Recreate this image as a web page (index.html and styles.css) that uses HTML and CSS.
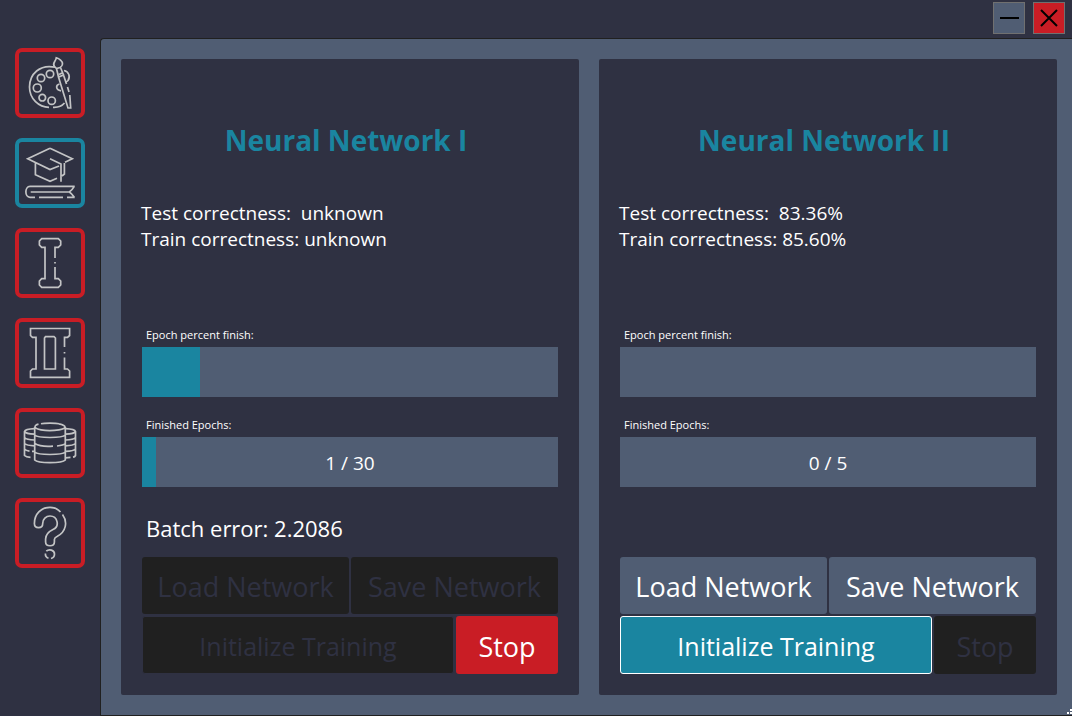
FILE: index.html
```html
<!DOCTYPE html>
<html lang="en">
<head>
<meta charset="utf-8">
<title>Neural Network Trainer</title>
<link rel="stylesheet" href="styles.css">
</head>
<body>
<div class="window">
  <header class="titlebar">
    <button class="win-btn" type="button" aria-label="Minimize">
      <svg viewBox="0 0 30 30"><path d="M6 15H25" stroke-width="2"/></svg>
    </button>
    <button class="win-btn win-close" type="button" aria-label="Close">
      <svg viewBox="0 0 30 30"><path d="M7 7L23 23M23 7L7 23" stroke-width="2"/></svg>
    </button>
  </header>
  <div class="body">
    <nav class="sidebar" aria-label="Sections">
      <button class="nav-btn" type="button" aria-label="Draw">
        <svg viewBox="4 4 62 62">
          <path d="M40 19.2C25 16 14.5 26 14.5 39C14.5 51 24 59.3 34 59.3M38 59.3C43 59.6 47 58 49.5 55M49 22.5C54 23.5 55.5 29 53 32.5C52 33.7 51 34 50.3 34"/>
          <circle cx="35" cy="26" r="3.7"/><circle cx="26" cy="30" r="3.7"/><circle cx="22.3" cy="40" r="4"/><circle cx="27.3" cy="49.7" r="3.3"/><circle cx="36.7" cy="52.7" r="3.7"/>
          <path d="M44.5 36C40.5 37 40.5 42 46 42.8"/>
          <path d="M39.5 18.5C36.5 15.5 41 13.5 41.3 9.8C44 10.5 47.8 13 47.5 16C47.3 18 46 19 45 19.5L41.5 20.5ZM41.5 20.5L43.5 29L48.5 27L45.5 19.5M43.5 29L53 60H55.7L54.8 47M48.5 27L51.5 36M52.5 39L54 44M44 26.5L48 24.5"/>
        </svg>
      </button>
      <button class="nav-btn nav-current" type="button" aria-label="Training" aria-current="page">
        <svg viewBox="4 4 62 62">
          <path d="M35 10.3L57.3 20.7L50 24.3M44 28L35 31.6L12.7 20.7L35 10.3M35 20.7L46 26V43.7M20.4 25V36.7L35 43.3L42 40.3M49.4 25V36L47 38"/>
          <path d="M59.7 48.4H15C9.5 48.4 9.5 59.3 15 59.3H20M24 59.3H48M52 59.3H59.7M59.3 48.4C57.5 51.5 56 53 54.3 54C56 55 57.5 56.5 59.3 59.3M15.7 54H54.3"/>
        </svg>
      </button>
      <button class="nav-btn" type="button" aria-label="Network I">
        <svg viewBox="4 4 62 62">
          <path d="M40 30V19.4H43.3L45.7 17V13L43.3 10.7H26.7L24.4 13V17L26.7 19.4H30V50.7H26.7L24.4 53V57L26.7 59.3H43.3L45.7 57V53L43.3 50.7H40V39M40 34V35.5"/>
        </svg>
      </button>
      <button class="nav-btn" type="button" aria-label="Network II">
        <svg viewBox="4 4 62 62">
          <path d="M49.5 29V19.4H52.5L54.6 17.5V10.5H15.5V17.5L17.5 19.4H21V51H17.5L15.5 53V59.4H54.6V53L52.5 51H49.5V39.5M49.5 34V35.5"/>
          <path d="M30.5 18.7H39L40.4 20V51H29.5V20Z"/>
        </svg>
      </button>
      <button class="nav-btn" type="button" aria-label="Datasets">
        <svg viewBox="4 4 62 62">
          <path d="M26 15.8C29 15 41 15 44 15.8C52 17.5 52 20.5 44 21.8C38 22.8 31 22.8 26 21.8C18.5 20.5 18.5 17.2 23.5 16.2M19.7 19V52C23 55.5 47 55.5 50.3 52V19M19.7 27C23 30.3 47 30.3 50.3 27M19.7 35.5C24 38 32 38.6 38 38.1M42 38C46 37.5 49 36.8 50.3 35.5M19.7 44C23 47.3 47 47.3 50.3 44"/>
          <path d="M19.5 20.7C14 21 10 22 9.5 23.5V47.5C11 49 13 49.2 15.5 49.4M9.5 23.5C10.5 25.3 15 26 19.5 26.2M9.5 29.5C11 31.3 15 31.9 19.5 32M9.5 35.5C11 37 15 37.7 19.5 37.8M9.5 41C11 42.8 13 43 14.5 43.2M17 43.4H19.5"/>
          <path d="M50.5 20.7C56 21 60 22 60.5 23.5V47.5C60 48.5 59 49 58 49.2M50.5 49.8L55.5 49.4M60.5 23.5C59.5 25.3 55 26 50.5 26.2M60.5 29.5C59 31.3 55 31.9 50.5 32M60.5 35.5C59 37 55 37.7 50.5 37.8M60.5 41C59 42.8 55 43.2 50.5 43.4"/>
        </svg>
      </button>
      <button class="nav-btn" type="button" aria-label="Help">
        <svg viewBox="4 4 62 62">
          <path d="M45.5 14C42.8 11 39 9.4 35 9.4C26 9.4 19.4 16 19.4 25.5C19.4 31 27.7 31 27.7 25.5C27.7 21 31 18 35 18C42.7 18 45 28.5 38 31.5C33 34 30.6 37 30.6 41V44C30.6 49 39.4 49 39.4 44V41.5C39.4 40 40.5 39.2 42 38.5C51 34 53 24 47.5 16.5"/>
          <path d="M31.3 53.2C34 50.5 39.5 52 39.5 56C39.5 58.5 38 60 36 60.5M33.5 60.3C31 59.5 30.3 58 30.4 55.5"/>
        </svg>
      </button>
    </nav>
    <main class="content">
      <section class="card">
        <h1 class="title">Neural Network I</h1>
        <p class="stats">Test correctness:&nbsp; unknown<br>Train correctness: unknown</p>
        <div class="controls">
          <div class="label" id="epoch-1">Epoch percent finish:</div>
          <div class="bar" role="progressbar" aria-labelledby="epoch-1" aria-valuenow="14"><div class="fill" style="width:14%"></div></div>
          <div class="label" id="done-1">Finished Epochs:</div>
          <div class="bar" role="progressbar" aria-labelledby="done-1" aria-valuenow="1" aria-valuemax="30"><div class="fill" style="width:3.33%"></div><span class="bar-text">1 / 30</span></div>
          <p class="batch">Batch error: 2.2086</p>
          <div class="row">
            <button class="btn" type="button" disabled>Load Network</button>
            <button class="btn" type="button" disabled>Save Network</button>
          </div>
          <div class="row">
            <button class="btn btn-init" type="button" disabled>Initialize Training</button>
            <button class="btn btn-stop" type="button">Stop</button>
          </div>
        </div>
      </section>
      <section class="card">
        <h1 class="title">Neural Network II</h1>
        <p class="stats">Test correctness:&nbsp; 83.36%<br>Train correctness: 85.60%</p>
        <div class="controls">
          <div class="label" id="epoch-2">Epoch percent finish:</div>
          <div class="bar" role="progressbar" aria-labelledby="epoch-2" aria-valuenow="0"></div>
          <div class="label" id="done-2">Finished Epochs:</div>
          <div class="bar" role="progressbar" aria-labelledby="done-2" aria-valuenow="0" aria-valuemax="5"><span class="bar-text">0 / 5</span></div>
          <p class="batch"></p>
          <div class="row">
            <button class="btn" type="button">Load Network</button>
            <button class="btn" type="button">Save Network</button>
          </div>
          <div class="row">
            <button class="btn btn-init" type="button">Initialize Training</button>
            <button class="btn btn-stop" type="button" disabled>Stop</button>
          </div>
        </div>
      </section>
      <svg class="grip" viewBox="0 0 6 6"><path d="M4 0h2v2h-2zM4 3h2v2h-2zM1 3h2v2h-2z"/></svg>
    </main>
  </div>
</div>
</body>
</html>
```
FILE: styles.css
```css
* { box-sizing: border-box; }

body {
  margin: 0;
  background: #2f3142;
  color: #fff;
  font-family: "Open Sans", "Noto Sans", sans-serif;
}

button { font: inherit; padding: 0; margin: 0; }

.window {
  display: flex;
  flex-direction: column;
  min-height: 100vh;
}

.titlebar {
  display: flex;
  justify-content: flex-end;
  gap: 8px;
  height: 38px;
  padding: 2px 7px 0 0;
}

.win-btn {
  width: 32px;
  height: 32px;
  background: #505d73;
  border: 1px solid #707070;
}
.win-close { background: #c91d25; }
.win-btn svg { display: block; width: 30px; height: 30px; stroke: #000; fill: none; }

.body { display: flex; flex: 1; }

.sidebar {
  display: flex;
  flex-direction: column;
  gap: 20px;
  flex: 0 0 100px;
  padding: 10px 15px;
}

.nav-btn {
  width: 70px;
  height: 70px;
  background: transparent;
  border: 4px solid #c91d25;
  border-radius: 7px;
}
.nav-current { border-color: #1a85a0; }
.nav-btn svg {
  display: block;
  width: 62px;
  height: 62px;
  fill: none;
  stroke: #c3c4c5;
  stroke-width: 1.7;
}

.content {
  position: relative;
  display: flex;
  flex: 1;
  gap: 20px;
  padding: 20px 15px 20px 20px;
  background: #505d73;
  border: 1px solid #202020;
  border-right: 0;
  border-top-left-radius: 4px;
}

.card {
  display: flex;
  flex-direction: column;
  flex: 1;
  padding: 61px 20px 21px;
  background: #2f3142;
  border-radius: 2px;
}

.title {
  margin: 0 8px 40px 0;
  color: #1a85a0;
  font-size: 28px;
  line-height: 40px;
  font-weight: 700;
  text-align: center;
}

.stats { margin: 0; font-size: 19px; line-height: 26px; }

.controls { margin-top: auto; padding: 0 1px; }

.label { padding-left: 4px; font-size: 11px; line-height: 16px; margin-bottom: 4px; }

.bar {
  position: relative;
  height: 50px;
  margin-bottom: 20px;
  background: #505d73;
}
.fill { height: 100%; background: #1a85a0; }
.bar-text {
  position: absolute;
  inset: 0;
  font-size: 19px;
  line-height: 52px;
  text-align: center;
}

.batch { height: 34px; margin: 24px 0 12px 4px; font-size: 22px; line-height: 34px; }

.row { display: flex; gap: 2px; }
.row + .row { margin-top: 2px; }

.btn {
  flex: 1;
  height: 57px;
  padding-top: 2px;
  border: 0;
  border-radius: 3px;
  background: #505d73;
  color: #fff;
  font-size: 27px;
}
.btn-init, .btn-stop { height: 58px; }
.btn-init { flex: 3; border: 1px solid #fff; background: #1a85a0; font-size: 25px; }
.btn-stop { flex: 0 0 102px; background: #c91d25; }
.btn:disabled { background: #202020; color: #2f3142; }
.btn-init:disabled { border-color: #2f3142; }

.grip { position: absolute; right: 0; bottom: 0; width: 6px; height: 6px; fill: #fff; }
```
